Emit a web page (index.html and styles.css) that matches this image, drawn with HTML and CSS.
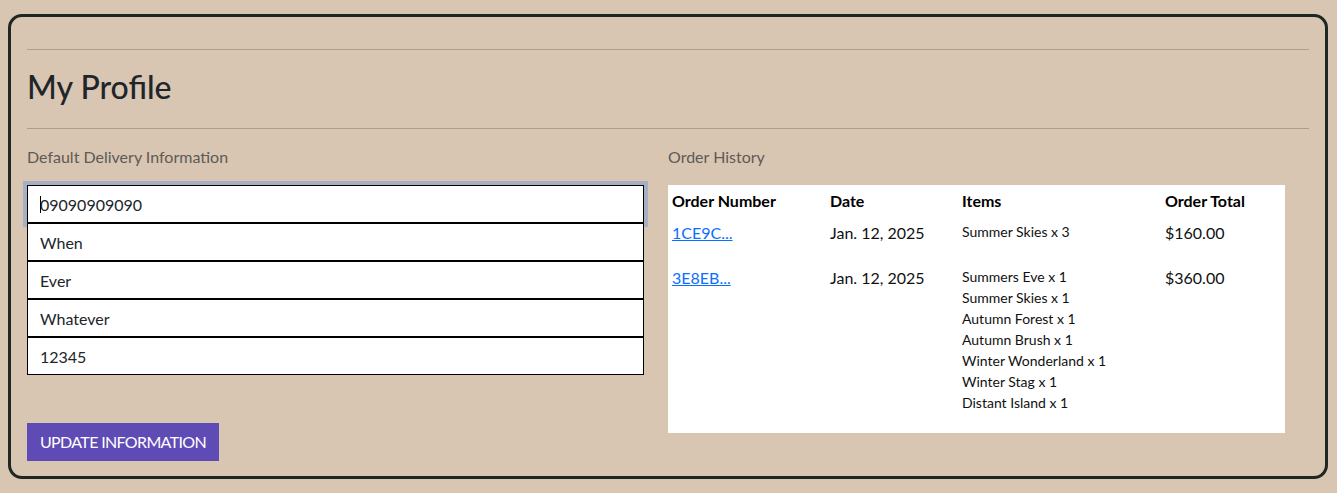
FILE: index.html
```html
<!DOCTYPE html>
<html lang="en">
<head>
<meta charset="utf-8">
<title>My Profile</title>
<link rel="stylesheet" href="styles.css">
</head>
<body>
<main class="card">
  <hr class="rule">
  <h2 class="title">My Profile</h2>
  <hr class="rule">
  <div class="columns">
    <section class="col">
      <p class="label">Default Delivery Information</p>
      <form class="form">
        <span class="field focused"><input class="input" type="text" value="09090909090"></span>
        <input class="input" type="text" value="When">
        <input class="input" type="text" value="Ever">
        <input class="input" type="text" value="Whatever">
        <input class="input" type="text" value="12345">
        <button class="btn" type="button">Update Information</button>
      </form>
    </section>
    <section class="col">
      <p class="label">Order History</p>
      <table class="orders">
        <colgroup>
          <col class="c1"><col class="c2"><col class="c3"><col class="c4">
        </colgroup>
        <thead>
          <tr><th>Order Number</th><th>Date</th><th>Items</th><th>Order Total</th></tr>
        </thead>
        <tbody>
          <tr>
            <td><a href="#">1CE9C...</a></td>
            <td>Jan. 12, 2025</td>
            <td><ul class="items"><li>Summer Skies x 3</li></ul></td>
            <td>$160.00</td>
          </tr>
          <tr>
            <td><a href="#">3E8EB...</a></td>
            <td>Jan. 12, 2025</td>
            <td><ul class="items">
              <li>Summers Eve x 1</li>
              <li>Summer Skies x 1</li>
              <li>Autumn Forest x 1</li>
              <li>Autumn Brush x 1</li>
              <li>Winter Wonderland x 1</li>
              <li>Winter Stag x 1</li>
              <li>Distant Island x 1</li>
            </ul></td>
            <td>$360.00</td>
          </tr>
        </tbody>
      </table>
    </section>
  </div>
</main>
</body>
</html>
```
FILE: styles.css
```css
* { box-sizing: border-box; }
html, body { margin: 0; padding: 0; }
body {
  background: #d8c6b2;
  font-family: Lato, "Liberation Sans", sans-serif;
  font-size: 16px;
  line-height: 24px;
  color: #212529;
}
.card {
  margin: 14px 9px 0 8px;
  height: 465px;
  border: 3px solid #1e2721;
  border-radius: 14px;
  padding: 16px;
}
.rule {
  margin: 16px 0;
  border: 0;
  border-top: 1px solid #aa9e90;
  height: 0;
}
.title {
  margin: 0 0 22px;
  padding-top: 2px;
  font-size: 32px;
  line-height: 38px;
  font-weight: 500;
  color: #212529;
}
.columns {
  display: grid;
  grid-template-columns: 617px 617px;
  column-gap: 24px;
}
.label {
  margin: 0 0 16px;
  color: #5e5a56;
}
.form { display: flex; flex-direction: column; align-items: flex-start; }
.field { position: relative; display: block; width: 100%; }
.field.focused .input { box-shadow: 0 0 0 4px rgba(13, 110, 253, .25); }
.field.focused::after {
  content: "";
  position: absolute;
  left: 13px;
  top: 11px;
  width: 1px;
  height: 17px;
  background: #000;
  z-index: 1;
}
.input {
  display: block;
  width: 100%;
  height: 38px;
  margin: 0;
  padding: 0 12px;
  border: 1px solid #000;
  border-radius: 0;
  background: #fff;
  font: inherit;
  color: #212529;
  outline: none;
  position: relative;
}
.btn {
  margin-top: 48px;
  height: 38px;
  padding: 0 13px;
  border: 0;
  background: #5f4bb6;
  color: #fff;
  font: inherit;
  letter-spacing: -0.65px;
  text-transform: uppercase;
  cursor: pointer;
}
.orders {
  width: 617px;
  border-collapse: collapse;
  table-layout: fixed;
  background: #fff;
  color: #000;
}
.c1 { width: 158px; }
.c2 { width: 132px; }
.c3 { width: 203px; }
.c4 { width: 124px; }
.orders th, .orders td {
  padding: 4px;
  text-align: left;
  vertical-align: top;
}
.orders th { font-weight: 700; }
.orders td { color: #111; }
.orders a { color: #0d6efd; text-decoration: underline; }
.items {
  list-style: none;
  margin: 0 0 16px;
  padding: 0;
  font-size: 14px;
  line-height: 21px;
}
```
